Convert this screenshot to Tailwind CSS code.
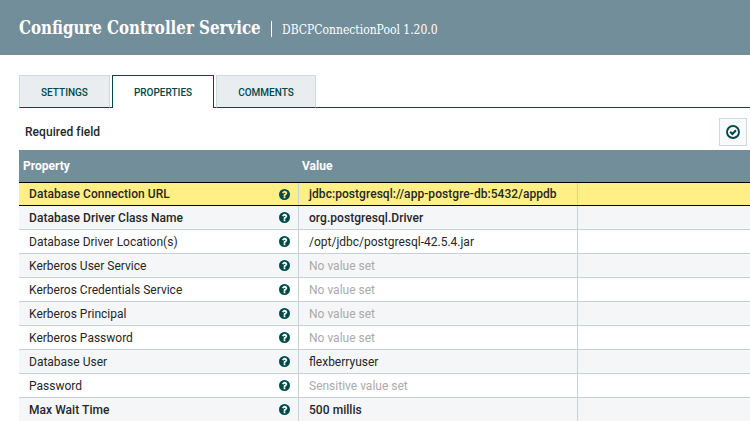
<!DOCTYPE html>
<html lang="en">
<head>
<meta charset="utf-8">
<title>Configure Controller Service</title>
<script src="https://cdn.jsdelivr.net/npm/@tailwindcss/browser@4"></script>
</head>
<body class="w-[750px] h-[421px] overflow-hidden bg-white font-['Roboto',sans-serif] text-[#262626]">
<svg class="hidden">
  <symbol id="help" viewBox="0 0 1536 1536"><path fill="#004849" d="M768 0a768 768 0 1 0 0 1536A768 768 0 0 0 768 0zM896 1248q0 32-32 32H672q-32 0-32-32v-192q0-32 32-32h192q32 0 32 32zM1152 576q0 76-38 134t-108 98q-110 65-110 120 0 32-32 32H672q-32 0-32-32v-36q0-120 140-190 116-60 116-120 0-72-116-72-75 0-158 112-22 26-46 8l-132-100q-24-20-6-48 128-226 364-226 130 0 240 90t110 230z"/></symbol>
</svg>
<header class="h-[55px] pl-[19px] flex bg-[#728e9b] text-white whitespace-nowrap font-['Roboto_Slab','DejaVu_Serif',serif]">
  <div class="w-[242px] pt-[16px]"><span class="fit inline-block origin-left font-bold text-[18px] leading-6" data-width="241.5">Configure Controller Service</span></div>
  <div class="ml-[10px] mt-[21px] w-px h-4 bg-white"></div>
  <div class="ml-[9.5px] w-[160px] pt-[17px]"><span class="fit inline-block origin-left text-[13px] leading-5" data-width="156">DBCPConnectionPool 1.20.0</span></div>
</header>
<nav class="mt-5 ml-[19px] h-[33px] flex text-[10px] leading-[34px] text-[#004849] font-medium text-center">
  <div class="w-[91px] border border-[#ccdadb] border-b-[#004849] bg-[#e9edf0]">SETTINGS</div>
  <div class="w-[2px] border-b border-[#004849]"></div>
  <div class="w-[102px] border border-b-0 border-[#004849] bg-white">PROPERTIES</div>
  <div class="w-[2px] border-b border-[#004849]"></div>
  <div class="w-[100px] border border-[#ccdadb] border-b-[#004849] bg-[#e9edf0]">COMMENTS</div>
  <div class="flex-1 border-b border-[#004849]"></div>
</nav>
<div class="h-[42px] pl-[25px] pr-[3px] pt-[10px] flex justify-between">
  <div class="mt-[6px] text-xs leading-4 font-medium tracking-[0.06px]">Required field</div>
  <div class="size-7 border border-[#ccdadb] bg-[#f9fafb] flex items-center justify-center">
    <svg class="size-[14px]" viewBox="0 0 14 14" fill="none" stroke="#004849"><circle cx="7" cy="7" r="6" stroke-width="1.9"/><path d="M4.200 6.700l2.200 2.200L10 5.200" stroke-width="2.100"/></svg>
  </div>
</div>
<div class="ml-[19px]">
  <div class="h-8 bg-[#728e9b] text-white font-bold text-xs leading-8 grid grid-cols-[279px_1fr]"><div class="pl-1">Property</div><div class="pl-[4px]">Value</div></div>
  <main id="rows"></main>
</div>
<script>
const fitTitles = () => {
  for (const el of document.querySelectorAll('.fit')) {
    el.style.transform = `scaleX(${el.dataset.width / el.offsetWidth})`;
  }
};
fitTitles();
new ResizeObserver(fitTitles).observe(document.querySelector('.fit'));
window.addEventListener('load', fitTitles);
document.fonts.ready.then(fitTitles);
const rows = [
  ['Database Connection URL','jdbc:postgresql://app-postgre-db:5432/appdb','b'],
  ['Database Driver Class Name','org.postgresql.Driver','b'],
  ['Database Driver Location(s)','/opt/jdbc/postgresql-42.5.4.jar',''],
  ['Kerberos User Service','No value set','u'],
  ['Kerberos Credentials Service','No value set','u'],
  ['Kerberos Principal','No value set','u'],
  ['Kerberos Password','No value set','u'],
  ['Database User','flexberryuser',''],
  ['Password','Sensitive value set','u'],
  ['Max Wait Time','500 millis','b']
];
document.getElementById('rows').innerHTML = rows.map(([name, value, kind], i) => {
  const bg = i === 0 ? 'bg-[#ffef85] border-y border-black' : (i % 2 ? 'bg-[#f4f6f7]' : 'bg-white') + ' border-b border-[#c7d2d7]';
  const weight = kind === 'b' ? 'font-medium tracking-[0.05px]' : '';
  const tone = kind === 'u' ? 'text-[#aaaaaa]' : '';
  const lead = i === 0 ? 'leading-[22px]' : 'leading-[24px]';
  return `<div class="h-6 grid grid-cols-[280px_279px_1fr] grid-rows-[100%] text-xs ${lead} ${bg} ${weight}">
    <div class="pl-[10px] pr-[8px] flex justify-between items-center border-r border-[#c7d2d7]"><span>${name}</span><svg class="size-[11px]"><use href="#help"/></svg></div>
    <div class="pl-[10px] border-r border-[#c7d2d7] whitespace-nowrap ${tone}">${value}</div><div></div></div>`;
}).join('');
</script>
</body>
</html>
